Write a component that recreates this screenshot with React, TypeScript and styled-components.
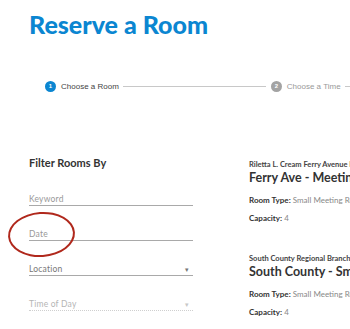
import React from 'react';
import styled, { createGlobalStyle } from 'styled-components';

const GlobalStyle = createGlobalStyle`
  html, body {
    margin: 0;
    padding: 0;
    background: #fff;
    overflow: hidden;
  }
  body {
    font-family: 'Lato', 'Liberation Sans', sans-serif;
    color: #333;
  }
`;

interface IRoom {
  branch: string;
  name: string;
  roomType: string;
  capacity: number;
}

const rooms: IRoom[] = [
  {
    branch: 'Riletta L. Cream Ferry Avenue Branch Library',
    name: 'Ferry Ave - Meeting Room',
    roomType: 'Small Meeting Room',
    capacity: 4,
  },
  {
    branch: 'South County Regional Branch Library',
    name: 'South County - Small Meeting Room',
    roomType: 'Small Meeting Room',
    capacity: 4,
  },
];

const filters = [
  { label: 'Keyword', kind: 'text' },
  { label: 'Date', kind: 'text' },
  { label: 'Location', kind: 'select' },
  { label: 'Time of Day', kind: 'disabled' },
];

const App: React.FC = () => {
  return (
    <Page>
      <GlobalStyle />
      <Title>Reserve a Room</Title>

      <Stepper>
        <Step>
          <StepDot active>1</StepDot>
          <StepLabel active>Choose a Room</StepLabel>
        </Step>
        <StepLine />
        <Step>
          <StepDot>2</StepDot>
          <StepLabel>Choose a Time</StepLabel>
        </Step>
        <StepLine />
      </Stepper>

      <Main>
        <Sidebar>
          <FilterTitle>Filter Rooms By</FilterTitle>
          {filters.map(f => (
            <Field key={f.label} kind={f.kind}>
              <FieldLabel kind={f.kind}>{f.label}</FieldLabel>
              {f.kind !== 'text' && <Caret kind={f.kind}>▾</Caret>}
              {f.label === 'Date' && <Circle />}
            </Field>
          ))}
        </Sidebar>

        <Results>
          {rooms.map(room => (
            <Card key={room.name}>
              <Branch>{room.branch}</Branch>
              <RoomName>{room.name}</RoomName>
              <Meta>
                <b>Room Type:</b> {room.roomType}
              </Meta>
              <Meta>
                <b>Capacity:</b> {room.capacity}
              </Meta>
            </Card>
          ))}
        </Results>
      </Main>
    </Page>
  );
};

const Page = styled.div`
  width: 350px;
  height: 329px;
  overflow: hidden;
  padding-left: 29px;
  box-sizing: border-box;
`;

const Title = styled.h1`
  margin: 0;
  padding-top: 9px;
  font-size: 25px;
  font-weight: 900;
  line-height: 30px;
  color: #0b86d1;
  white-space: nowrap;
`;

const Stepper = styled.div`
  display: flex;
  align-items: center;
  margin-top: 41px;
  padding-left: 16px;
  width: 600px;
  height: 12px;
  white-space: nowrap;
`;

const Step = styled.div`
  display: flex;
  align-items: center;
  gap: 5px;
  flex-shrink: 0;
`;

const StepDot = styled.span<{ active?: boolean }>`
  width: 11px;
  height: 11px;
  border-radius: 50%;
  background: ${p => (p.active ? '#0b86d1' : '#a3a3a3')};
  color: #fff;
  font-family: 'Liberation Sans', Arial, sans-serif;
  font-size: 6px;
  font-weight: 700;
  display: flex;
  align-items: center;
  justify-content: center;
`;

const StepLabel = styled.span<{ active?: boolean }>`
  font-family: 'Liberation Sans', Arial, sans-serif;
  font-size: 8px;
  color: ${p => (p.active ? '#444' : '#999')};
`;

const StepLine = styled.span`
  flex: 0 0 143px;
  height: 1px;
  background: #c8c8c8;
  margin: 0 5px 0 4px;
`;

const Main = styled.div`
  display: grid;
  grid-template-columns: 164px 200px;
  column-gap: 56px;
  margin-top: 64px;
`;

const Sidebar = styled.div`
  display: flex;
  flex-direction: column;
`;

const FilterTitle = styled.h2`
  margin: 0 0 22px;
  font-size: 11px;
  font-weight: 700;
  line-height: 14px;
  color: #333;
`;

const Field = styled.div<{ kind: string }>`
  position: relative;
  height: 13px;
  margin-bottom: 21px;
  border-bottom: 1px ${p => (p.kind === 'disabled' ? 'dotted #cfcfcf' : 'solid #a9a9a9')};
  display: flex;
  align-items: flex-end;
  justify-content: space-between;
`;

const FieldLabel = styled.span<{ kind: string }>`
  font-size: 8.5px;
  line-height: 11px;
  letter-spacing: 0.2px;
  color: ${p => (p.kind === 'disabled' ? '#b5b5b5' : p.kind === 'select' ? '#777' : '#999')};
`;

const Caret = styled.span<{ kind: string }>`
  font-size: 7px;
  line-height: 11px;
  margin-right: 4px;
  color: ${p => (p.kind === 'disabled' ? '#c8c8c8' : '#777')};
`;

const Circle = styled.span`
  position: absolute;
  left: -21px;
  top: -15px;
  width: 63px;
  height: 41px;
  border: 2px solid #b0281c;
  border-radius: 50%;
  transform: rotate(-4deg);
`;

const Results = styled.div`
  display: flex;
  flex-direction: column;
  padding-top: 5px;
`;

const Card = styled.div`
  white-space: nowrap;
  margin-bottom: 24px;
`;

const Branch = styled.div`
  font-size: 7.5px;
  font-weight: 700;
  line-height: 8px;
  color: #444;
`;

const RoomName = styled.div`
  font-size: 12.5px;
  font-weight: 700;
  line-height: 17px;
  color: #333;
  margin-bottom: 9px;
`;

const Meta = styled.div`
  font-size: 8px;
  line-height: 10px;
  color: #888;
  margin-bottom: 8px;
  b {
    color: #333;
    font-weight: 700;
  }
`;

export default App;
